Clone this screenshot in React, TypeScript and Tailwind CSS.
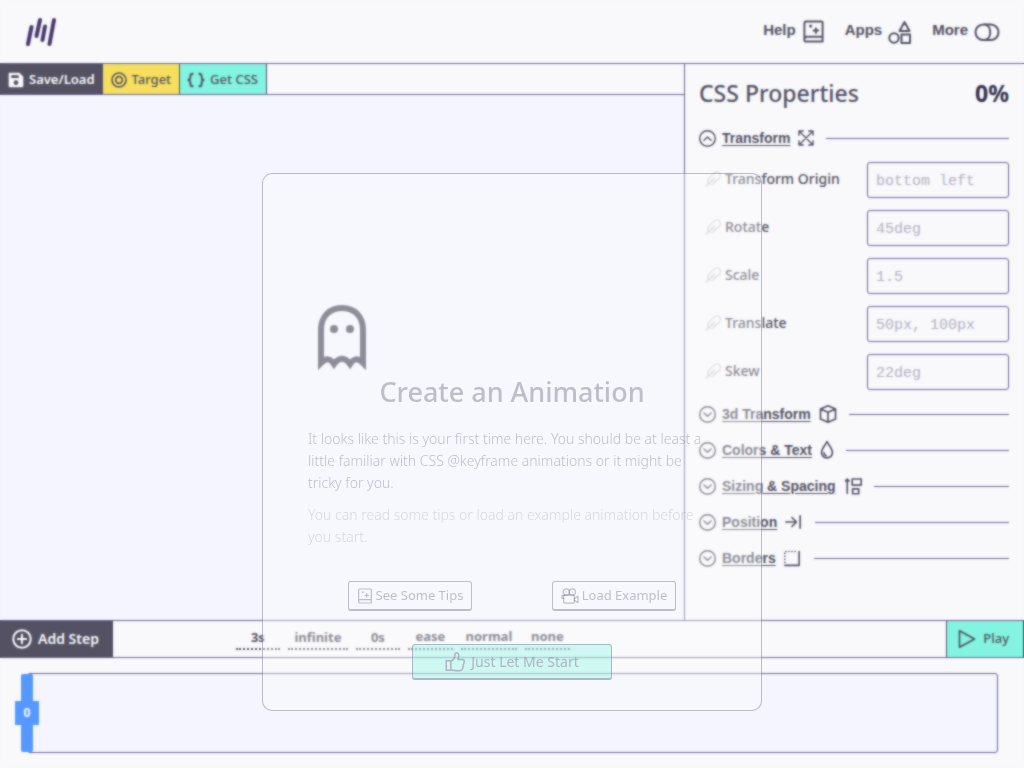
import React from "react";
import type { ReactNode } from "react";

type IconProps = { children: ReactNode; className?: string; box?: string; stroke?: number };

function Icon({ children, className = "size-5", box = "0 0 24 24", stroke = 2 }: IconProps) {
  return (
    <svg
      className={`shrink-0 ${className}`}
      viewBox={box}
      fill="none"
      stroke="currentColor"
      strokeWidth={stroke}
      strokeLinecap="round"
      strokeLinejoin="round"
      aria-hidden="true"
    >
      {children}
    </svg>
  );
}

const Book = ({ className, stroke = 2 }: { className?: string; stroke?: number }) => (
  <Icon className={className} stroke={stroke}>
    <path d="M21.500 22.500H4.500a2 2 0 0 1-2-2V3a1.500 1.500 0 0 1 1.500-1.500H20.500a1 1 0 0 1 1 1V22.500M2.500 20a2.500 2.500 0 0 1 2-2.500H21.500" />
    <path d="M14.500 8.500v5M12 11h5M9 5.600v1.400M8.300 6.300h1.400" />
  </Icon>
);

const Logo = () => (
  <Icon className="h-8 w-8" box="0 0 32 32" stroke={4}>
    <path d="M4 28 7.500 11M12.500 20 16 4M18.500 24 21 10.500M25.500 28 30 4" />
  </Icon>
);

const navItems = [
  { label: "Help", icon: <Book className="size-[23px]" /> },
  {
    label: "Apps",
    icon: (
      <Icon className="size-6">
        <path d="m16.500 2 5 9h-10z" />
        <circle cx="6" cy="18" r="4.700" />
        <path d="M13.500 14.500h8.500v8.500h-8.500z" />
      </Icon>
    ),
  },
  {
    label: "More",
    icon: (
      <Icon className="h-6 w-[26px]" box="0 0 26 24">
        <rect x="1.500" y="4.500" width="23" height="15.500" rx="7.750" />
        <path d="M11 4.600c7 1 7 14.300 0 15.300" />
      </Icon>
    ),
  },
];

const properties = [
  { id: "origin", label: "Transform Origin", hint: "bottom left" },
  { id: "rotate", label: "Rotate", hint: "45deg" },
  { id: "scale", label: "Scale", hint: "1.5" },
  { id: "translate", label: "Translate", hint: "50px, 100px" },
  { id: "skew", label: "Skew", hint: "22deg" },
];

const sections = [
  {
    label: "3d Transform",
    icon: (
      <Icon className="h-5 w-[18px]" box="2 0 20 24">
        <path d="m12 2 9 4v12L12 22l-9-4V6zM3 6l9 4 9-4M12 10v12" />
      </Icon>
    ),
  },
  {
    label: "Colors & Text",
    icon: (
      <Icon className="h-5 w-[14px]" box="1 0 16 24">
        <path d="M9 1.800c2.500 5 6.500 8.700 6.500 13.200a6.500 6.500 0 0 1-13 0C2.500 10.500 6.500 6.800 9 1.800z" />
        <path d="M5.500 15.500c0 2 1 3 2.500 3.500" />
      </Icon>
    ),
  },
  {
    label: "Sizing & Spacing",
    icon: (
      <Icon className="h-5 w-[18px]" box="0 0 22 24">
        <path d="M4 21V4M2 6l2-2.500L6 6M10 3.500h11v7.500H10zM10.500 15.500h7.500v6h-7.500z" />
      </Icon>
    ),
  },
  {
    label: "Position",
    icon: (
      <Icon className="h-5 w-[18px]" box="0 0 22 24">
        <path d="M1 12h13M8.500 6.500 14 12l-5.500 5.500M18.500 4.500v15" />
      </Icon>
    ),
  },
  {
    label: "Borders",
    icon: (
      <Icon className="h-5 w-[18px]" box="0 0 22 24">
        <path d="M18.500 4v17H1" />
        <path d="M1 17.500V4h14.500" strokeDasharray="0.1 3.600" />
      </Icon>
    ),
  },
];

function SectionHeader({ label, icon, open = false }: { label: string; icon: ReactNode; open?: boolean }) {
  return (
    <div className="flex h-9 items-center">
      <button type="button" aria-expanded={open} className="flex items-center gap-2 font-['Liberation_Sans',sans-serif] text-sm font-bold">
        <span className="flex items-center gap-1.5">
          <Icon className="size-[17px]" stroke={2}>
            <circle cx="12" cy="12" r="11" />
            {open ? <path d="m7 14.500 5-4.500 5 4.500" /> : <path d="m7 10 5 4.500 5-4.500" />}
          </Icon>
          <span className="underline underline-offset-2">{label}</span>
        </span>
        {icon}
      </button>
      <hr className="mt-px ml-3 flex-1 border-[#6a6190]" />
    </div>
  );
}

const timing = [
  { label: "Duration", value: "3s", width: "w-11" },
  { label: "Iterations", value: "infinite", width: "w-15" },
  { label: "Delay", value: "0s", width: "w-11" },
];

const selects = [
  { label: "Easing", value: "ease", width: "w-[45px]" },
  { label: "Direction", value: "normal", width: "w-14" },
  { label: "Fill mode", value: "none", width: "w-[45px]" },
];

function Workspace() {
  return (
    <div className="flex min-h-screen flex-col">
      <header className="flex h-16 items-center justify-between border-b border-[#6a6190] px-6">
        <a href="#" aria-label="Home" className="text-[#4b3a6e]">
          <Logo />
        </a>
        <nav className="flex gap-5">
          {navItems.map((item) => (
            <a key={item.label} href="#" className="flex items-start gap-1.5 pt-px font-['Liberation_Sans',sans-serif] text-[15px] leading-5 font-bold">
              {item.label}
              {item.icon}
            </a>
          ))}
        </nav>
      </header>

      <main className="flex flex-1">
        <div className="flex flex-1 flex-col">
          <div className="flex h-[31px] border-b border-[#6a6190] text-[13px]">
            <button type="button" className="flex items-center gap-[5px] bg-[#545263] px-2 pt-px font-semibold text-[#f8f8fc]">
              <svg className="size-4" viewBox="0 0 24 24" fill="currentColor" aria-hidden="true">
                <path fillRule="evenodd" d="M2 1h15l6 6v14a2 2 0 0 1-2 2H3a2 2 0 0 1-2-2V2a1 1 0 0 1 1-1zm3 4v4h11V5zm7 7.500a3.500 3.500 0 1 0 0 7 3.500 3.500 0 0 0 0-7z" />
              </svg>
              Save/Load
            </button>
            <button type="button" className="flex items-center gap-[5px] border-r border-[#545263] bg-[#f6df5f] px-2 pt-px font-medium">
              <Icon className="size-4" stroke={2.4}>
                <circle cx="12" cy="12" r="10.500" />
                <circle cx="12" cy="12" r="5" />
              </Icon>
              Target
            </button>
            <button type="button" className="flex items-center gap-[5px] border-r border-[#545263] bg-[#82f3e0] pt-px pr-2 pl-[7px] font-medium">
              <Icon className="h-4 w-[18px]" box="0 0 26 24" stroke={3}>
                <path d="M8 2.500c-3 0-3.500 1-3.500 4v2c0 2-1 3-3 3.500 2 .5 3 1.500 3 3.500v2c0 3 .5 4 3.500 4M18 2.500c3 0 3.500 1 3.500 4v2c0 2 1 3 3 3.500-2 .5-3 1.500-3 3.500v2c0 3-.5 4-3.500 4" />
              </Icon>
              Get CSS
            </button>
          </div>
          <div className="flex flex-1 items-center justify-center bg-[#f4f4fe] pb-[41px]">
            <Icon className="h-[68px] w-[52px]" box="0 0 52 68" stroke={6}>
              <path
                strokeLinecap="butt"
                strokeLinejoin="miter"
                d="M5 60V27C5 13 14 5 26 5s21 8 21 22v33c-5-5-9-5-13 1-5-7-11-7-16 0-4-6-8-6-13-1z"
              />
              <circle cx="18" cy="26" r="4" fill="currentColor" stroke="none" />
              <circle cx="34" cy="26" r="4" fill="currentColor" stroke="none" />
            </Icon>
          </div>
        </div>

        <aside className="w-[340px] border-l border-[#6a6190] pt-[11px] pr-[15px] pl-[14px]">
          <div className="flex h-9 items-center justify-between text-[23px]">
            <h1 className="font-medium">CSS Properties</h1>
            <span className="font-bold text-[#34324a]">0%</span>
          </div>
          <div className="pt-[9px]">
            <SectionHeader
              open
              label="Transform"
              icon={
                <Icon className="size-4">
                  <path d="M1.500 1.500 22.500 22.500M22.500 1.500 1.500 22.500M1.500 8V1.500H8M16 1.500h6.500V8M22.500 16v6.500H16M8 22.500H1.500V16" />
                </Icon>
              }
            />
            <div className="flex flex-col gap-3 py-1.5">
              {properties.map((property) => (
                <div key={property.id} className="flex h-9 items-center">
                  <label htmlFor={property.id} className="flex flex-1 items-center gap-1 pb-0.5 pl-1.5 text-sm font-medium">
                    <Icon className="size-4 text-[#cac8d4]" stroke={1.6}>
                      <path d="M1.500 22.500 14 10M4.500 19.500v-7l8-8.500c3-3 7-3 9-1s2 6-1 9l-8 7.500zM9 15h8" />
                    </Icon>
                    {property.label}
                  </label>
                  <input
                    id={property.id}
                    placeholder={property.hint}
                    className="h-9 w-[142px] rounded-[3px] border border-[#6a6190] bg-transparent px-2 pt-0.5 font-['Liberation_Mono',monospace] text-[15px] placeholder:text-[#b4b2be]"
                  />
                </div>
              ))}
            </div>
            {sections.map((section) => (
              <SectionHeader key={section.label} label={section.label} icon={section.icon} />
            ))}
          </div>
        </aside>
      </main>

      <footer>
        <div className="flex h-[38px] border-y border-[#6a6190]">
          <button type="button" className="flex items-center gap-1.5 bg-[#545263] pr-[14px] pl-3 text-sm font-semibold text-[#f8f8fc]">
            <Icon className="size-5" stroke={2.4}>
              <circle cx="12" cy="12" r="10.500" />
              <path d="M12 7v10M7 12h10" />
            </Icon>
            Add Step
          </button>
          <div className="ml-[123px] flex flex-1 items-start gap-2 pt-1 text-[13px] font-bold">
            {timing.map((field) => (
              <input
                key={field.label}
                aria-label={field.label}
                defaultValue={field.value}
                className={`h-[25px] border-b-2 border-dotted border-[#545263] bg-transparent text-center ${field.width}`}
              />
            ))}
            {selects.map((field) => (
              <select
                key={field.label}
                aria-label={field.label}
                className={`h-[25px] appearance-none border-b-2 border-dotted border-[#545263] bg-transparent text-center [text-align-last:center] ${field.width}`}
              >
                <option>{field.value}</option>
              </select>
            ))}
          </div>
          <button type="button" className="flex items-center gap-1.5 border-x border-[#545263] bg-[#82f3e0] pr-3.5 pl-2.5 text-[13px] font-medium">
            <Icon className="size-5">
              <path d="M3 2v20l18-10z" />
            </Icon>
            Play
          </button>
        </div>
        <div className="flex items-center py-[15px] pr-[26px] pl-[15px]">
          <div className="relative flex h-[78px] w-6 flex-col items-center text-xs font-bold text-[#f8f8fc]">
            <span className="w-3 flex-1 rounded-t-xs bg-[#5598ff]" />
            <button type="button" className="size-6 bg-[#5598ff]">
              0
            </button>
            <span className="w-3 flex-1 rounded-b-xs bg-[#5598ff]" />
          </div>
          <div className="-ml-3 h-20 flex-1 rounded-[3px] border border-[#6a6190] bg-[#f4f4fe]" />
        </div>
      </footer>
    </div>
  );
}

function WelcomeDialog() {
  return (
    <div
      role="dialog"
      aria-labelledby="welcome-title"
      className="absolute top-[173px] left-1/2 z-30 flex h-[538px] w-[500px] -translate-x-1/2 flex-col rounded-[10px] border border-[#4c4478]/35 bg-[#fbfdfc]/35 px-[45px] pt-[198px] text-[#52506a]/35"
    >
      <h2 id="welcome-title" className="text-center text-[27px] leading-10 font-medium">
        Create an Animation
      </h2>
      <div className="flex flex-col gap-2.5 pt-4 text-sm leading-[22px] font-light">
        <p>
          It looks like this is your first time here. You should be at least a little familiar with CSS @keyframe animations or it might be tricky for you.
        </p>
        <p className="text-[#52506a]/20">You can read some tips or load an example animation before you start.</p>
      </div>
      <div className="flex justify-between px-10 pt-[33px] text-[13px]">
        <button type="button" className="flex h-[30px] w-[124px] items-center justify-center gap-[3px] rounded-[3px] border border-b-2 border-[#52506a]/35 pt-px whitespace-nowrap">
          <Book className="size-4" stroke={1.8} />
          See Some Tips
        </button>
        <button type="button" className="flex h-[30px] w-[124px] items-center justify-center gap-[3px] rounded-[3px] border border-b-2 border-[#52506a]/35 pt-px whitespace-nowrap">
          <Icon className="h-4 w-[18px]" box="0 0 27 24" stroke={1.8}>
            <circle cx="8" cy="6" r="4.700" />
            <circle cx="17" cy="6" r="4.700" />
            <path d="M5 11H1.500v4.500H4M20 16l5.500-3.500v9.500L20 18.500M8 6h.1M17 6h.1" />
            <path d="M5.500 10.700h13c1 0 1.500.5 1.500 1.500v9c0 1-.5 1.500-1.500 1.500h-13c-1 0-1.500-.5-1.500-1.500v-9c0-1 .5-1.500 1.500-1.500z" />
          </Icon>
          Load Example
        </button>
      </div>
      <button type="button" className="mt-[33px] flex h-9 w-[200px] items-center justify-center gap-1.5 self-center rounded-[3px] border border-b-2 border-[#52506a]/35 bg-[#82f3e0]/35 text-sm text-[#8c6f8f]/50">
        <Icon className="size-5" stroke={1.8}>
          <path d="M7 11c3-1 5-4 5-8 0-3 4-2.500 4.500.5.3 2-.5 4-1 5.500H21c2 0 2.500 1.500 2 3l-2 8c-.5 2-2 2.500-4 2.500-4 0-7 0-10-1.500M1.500 10.500H7V22H1.500z" />
        </Icon>
        Just Let Me Start
      </button>
    </div>
  );
}

export default function App() {
  return (
    <div className="relative min-h-screen bg-[#f8f8fc] font-['Noto_Sans',sans-serif] text-[#545263]">
      <Workspace />
      <div className="absolute inset-0 z-20 opacity-70 backdrop-blur-[1px]" />
      <WelcomeDialog />
    </div>
  );
}
